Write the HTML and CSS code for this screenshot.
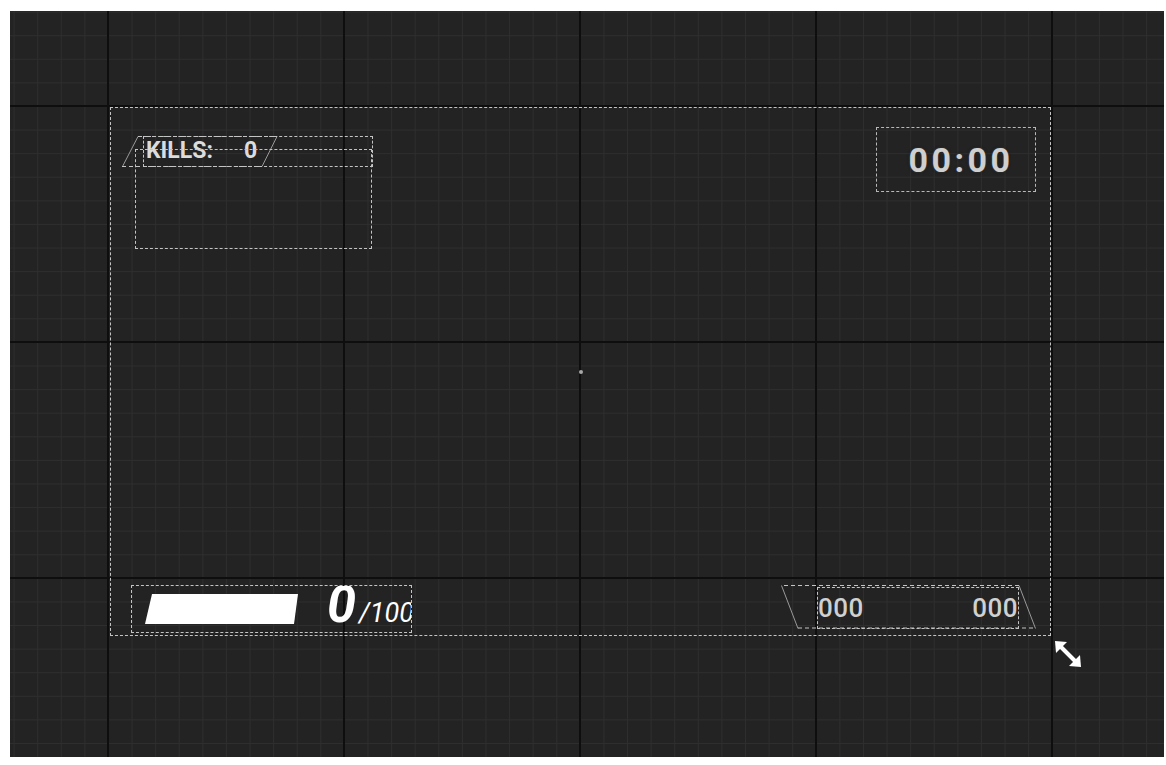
FILE: index.html
```html
<!DOCTYPE html>
<html>
<head>
<meta charset="utf-8">
<link rel="stylesheet" href="styles.css">
</head>
<body>
<div class="viewport">
  <div class="canvas">
    <div class="row top">
      <div class="kills">
        <svg class="kills-frame" width="251" height="31" viewBox="0 0 251 31">
          <line x1="0.5" y1="30.5" x2="16" y2="0.5" class="slant"/>
          <line x1="140" y1="30.5" x2="155" y2="0.5" class="slant"/>
          <line x1="16" y1="0.5" x2="155" y2="0.5" class="dash"/>
          <line x1="0" y1="30.5" x2="140" y2="30.5" class="dash"/>
        </svg>
        <div class="kills-row"></div>
        <div class="kills-text">KILLS:<span class="kills-num">0</span></div>
        <div class="kills-list"></div>
      </div>
      <div class="timer">00:00</div>
    </div>
    <div class="row bottom">
      <div class="health">
        <div class="health-bar"></div>
        <div class="hp"><span class="hp-cur">0</span><span class="hp-max">/100</span></div>
      </div>
      <div class="ammo">
        <svg class="ammo-frame" width="255" height="44" viewBox="0 0 255 44">
          <line x1="0.5" y1="0.5" x2="17" y2="43.5" class="slant"/>
          <line x1="238" y1="0.5" x2="254.5" y2="43.5" class="slant"/>
          <line x1="3" y1="0.5" x2="238" y2="0.5" class="dash"/>
          <line x1="17" y1="43" x2="255" y2="43" class="dash"/>
        </svg>
        <div class="ammo-box"><span>000</span><span>000</span></div>
      </div>
    </div>
    <span class="center-dot"></span>
    <svg class="resize" width="28" height="28" viewBox="0 0 28 28">
      <line x1="6" y1="6" x2="22" y2="22" stroke="#ffffff" stroke-width="4"/>
      <polygon points="1,1 13,2 2,13" fill="#ffffff"/>
      <polygon points="27,27 15,26 26,15" fill="#ffffff"/>
    </svg>
  </div>
</div>
</body>
</html>
```
FILE: styles.css
```css
html, body {
  margin: 0;
  padding: 0;
  background: #ffffff;
}

body {
  font-family: Roboto, "Liberation Sans", sans-serif;
}

.viewport {
  margin: 11px 2px 8px 10px;
  width: 1154px;
  height: 746px;
  overflow: hidden;
  background-color: #232323;
  background-image:
    linear-gradient(to right, #0e0e0e 0, #0e0e0e 2px, transparent 2px),
    linear-gradient(to bottom, #0e0e0e 0, #0e0e0e 2px, transparent 2px),
    linear-gradient(to right, #2e2e2e 0, #2e2e2e 1px, transparent 1px),
    linear-gradient(to bottom, #2e2e2e 0, #2e2e2e 1px, transparent 1px);
  background-size: 236px 100%, 100% 236px, 23.6px 100%, 100% 23.6px;
  background-position: 97px 0, 0 94px, 3.6px 0, 0 0.6px;
  padding-top: 96px;
  padding-left: 100px;
  box-sizing: border-box;
}

.canvas {
  position: relative;
  width: 941px;
  height: 529px;
  box-sizing: border-box;
  border: 1px dashed #c4c4c4;
  display: flex;
  flex-direction: column;
  justify-content: space-between;
}

.row {
  display: flex;
  justify-content: space-between;
}

.row.top { align-items: flex-start; }
.row.bottom { align-items: flex-end; }

/* kills widget */
.kills {
  display: grid;
  width: 251px;
  height: 113px;
  margin: 28px 0 0 11px;
}

.kills > * {
  grid-area: 1 / 1;
}

.slant {
  stroke: #9a9a9a;
  stroke-width: 1;
}

.dash {
  stroke: #c4c4c4;
  stroke-width: 1;
  stroke-dasharray: 4 3;
}

.kills-frame { display: block; }

.kills-row {
  margin-left: 21px;
  width: 230px;
  height: 31px;
  box-sizing: border-box;
  border: 1px dashed #c4c4c4;
}

.kills-text {
  margin: 1px 0 0 24px;
  height: 28px;
  line-height: 28px;
  font-size: 23px;
  font-weight: 700;
  color: #dcdcdc;
  white-space: nowrap;
}

.kills-num {
  margin-left: 31px;
}

.kills-list {
  margin: 13px 0 0 13px;
  width: 237px;
  height: 100px;
  box-sizing: border-box;
  border: 1px dashed #c4c4c4;
}

/* timer */
.timer {
  margin: 19px 14px 0 0;
  width: 160px;
  height: 65px;
  box-sizing: border-box;
  border: 1px dashed #b8b8b8;
  display: flex;
  align-items: center;
  justify-content: center;
  padding-left: 10px;
  font-size: 34px;
  font-weight: 700;
  letter-spacing: 3.5px;
  color: #cfcfcf;
  text-shadow: 0 0 3px rgba(0, 0, 0, 0.9), 0 0 2px rgba(200, 200, 200, 0.5);
}

/* health */
.health {
  margin: 0 0 2px 20px;
  width: 281px;
  height: 48px;
  box-sizing: border-box;
  border: 1px dashed #c4c4c4;
  display: flex;
  align-items: flex-start;
  overflow: hidden;
}

.health-bar {
  margin: 8px 0 0 13px;
  width: 153px;
  height: 30px;
  flex: none;
  background: #ffffff;
  clip-path: polygon(7px 0, 153px 0, 149px 30px, 0 30px);
}

.hp {
  margin: -4px 0 0 29px;
  line-height: 46px;
  white-space: nowrap;
  color: #ffffff;
  font-style: italic;
}

.hp-cur {
  font-size: 52px;
  font-weight: 700;
}

.hp-max {
  font-size: 27px;
  font-weight: 400;
  margin-left: 3px;
}

/* ammo */
.ammo {
  margin: 0 14px 6px 0;
  width: 255px;
  height: 44px;
  display: grid;
}

.ammo > * {
  grid-area: 1 / 1;
}

.ammo-frame { display: block; }

.ammo-box {
  margin: 2px 0 0 36px;
  width: 202px;
  height: 42px;
  box-sizing: border-box;
  border: 1px dashed #c4c4c4;
  display: flex;
  justify-content: space-between;
  align-items: center;
  font-size: 26px;
  font-weight: 500;
  letter-spacing: 0.5px;
  color: #d0d0d0;
  line-height: 1;
}

.center-dot {
  position: absolute;
  left: 50%;
  top: 50%;
  width: 4px;
  height: 4px;
  margin: -2px 0 0 -2px;
  border-radius: 50%;
  background: #a8a8a8;
}

.resize {
  position: absolute;
  left: 943px;
  top: 532px;
  display: block;
}
```
